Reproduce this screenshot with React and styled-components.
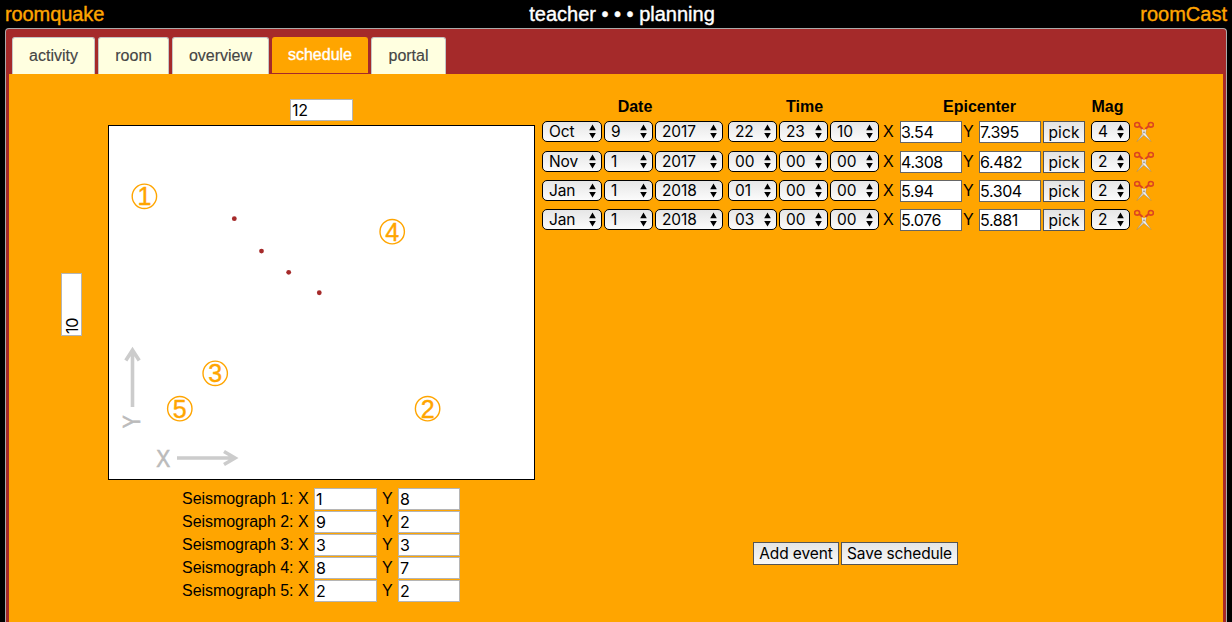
import React from 'react';
import styled, { createGlobalStyle } from 'styled-components';

const GlobalStyle = createGlobalStyle`
  * { box-sizing: border-box; }
  body {
    margin: 0;
    background: #000;
    overflow: hidden;
    font: 16px/18px "Liberation Sans", Arial, sans-serif;
  }
`;

const Page = styled.div`
  display: flex;
  flex-direction: column;
  height: 622px;
  padding: 0 5px;
`;

const TopBar = styled.header`
  display: grid;
  grid-template-columns: 1fr auto 1fr;
  flex: none;
  height: 28px;
  font-size: 20px;
  line-height: 28px;
  color: orange;
  white-space: nowrap;
  -webkit-text-stroke: 0.4px currentColor;
`;

const AppName = styled.div`
  letter-spacing: -0.1px;
`;

const Title = styled.div`
  padding-left: 12px;
  color: #fff;
`;

const AppLink = styled.div`
  text-align: right;
`;

const Frame = styled.main`
  flex: none;
  height: 594px;
  padding: 8px 3px 0;
  background: brown;
  border: 1px solid #aaa;
  border-bottom: 0;
  border-radius: 4px 4px 0 0;
`;

const TabList = styled.nav`
  display: flex;
  gap: 3px;
  height: 37px;
  padding-left: 3px;
`;

const Tab = styled.div`
  width: ${(p) => p.$width}px;
  height: ${(p) => (p.$active ? 36 : 37)}px;
  border: 1px solid ${(p) => (p.$active ? 'orange' : '#c5c5c5')};
  border-bottom: 0;
  border-radius: 3px 3px 0 0;
  background: ${(p) => (p.$active ? 'orange' : 'lightyellow')};
  color: ${(p) => (p.$active ? '#fff' : '#454545')};
  -webkit-text-stroke: ${(p) => (p.$active ? '0.4px #fff' : '0.15px #454545')};
  line-height: ${(p) => (p.$active ? 34 : 36)}px;
  text-align: center;
`;

const Panel = styled.section`
  display: flex;
  height: 548px;
  background: orange;
`;

const RoomColumn = styled.div`
  width: 533px;
  flex: none;
  padding-top: 25px;
`;

const TopDimension = styled.div`
  display: flex;
  height: 26px;
  padding-left: 281px;
`;

const Field = styled.div`
  width: ${(p) => p.$width || 63}px;
  height: 22px;
  border: 1px solid ${(p) => (p.$dark ? '#666' : '#b5b5b5')};
  background: #fff;
  padding-left: ${(p) => (p.$dark ? 0 : 1)}px;
  font: 16px/21px Inter, sans-serif;
  letter-spacing: ${(p) => p.$spacing || '-0.35px'};
  white-space: nowrap;
`;

const MapRow = styled.div`
  display: flex;
  align-items: center;
  height: 355px;
  padding-left: 52px;
`;

const SideField = styled(Field)`
  width: 21px;
  height: 63px;
  margin-top: 4px;
  writing-mode: vertical-rl;
  transform: rotate(180deg);
  padding: 1px 0 0;
  line-height: 20px;
`;

const RoomMap = styled.svg`
  width: 427px;
  height: 355px;
  margin-left: 26px;
  border: 1px solid #000;
  background: #fff;
  font-family: "Liberation Sans", Arial, sans-serif;
`;

const SeismographList = styled.div`
  display: flex;
  flex-direction: column;
  gap: 1px;
  padding: 8px 0 0 173px;
`;

const Seismograph = styled.div`
  display: grid;
  grid-template-columns: 132px 63px 21px 62px;
  height: 22px;
  line-height: 22px;
  letter-spacing: -0.04px;
  white-space: nowrap;
`;

const AxisLabel = styled.span`
  padding-left: 5px;
`;

const ScheduleColumn = styled.div`
  display: flex;
  flex-direction: column;
  width: 615px;
  height: 491px;
  padding-top: 23px;
`;

const Headings = styled.div`
  display: grid;
  grid-template-columns: 186px 153px 197px 59px;
  height: 24px;
  line-height: 19px;
  font-weight: bold;
  text-align: center;
`;

const Events = styled.div`
  display: flex;
  flex-direction: column;
`;

const EventRow = styled.div`
  display: flex;
  gap: 2px;
  height: ${(p) => p.$height}px;
  align-items: flex-start;
`;

const Select = styled.div`
  display: flex;
  flex: none;
  align-items: center;
  justify-content: space-between;
  width: ${(p) => p.$width}px;
  height: 21px;
  padding: 0 5px 0 6px;
  margin-left: ${(p) => p.$before || 0}px;
  border: 1px solid #000;
  border-radius: 5px;
  background: linear-gradient(#e6e6e6, #fbfbfb);
  font: 15.5px/19px Inter, sans-serif;
  letter-spacing: -0.1px;
`;

const Axis = styled.span`
  width: ${(p) => p.$width}px;
  padding-left: ${(p) => p.$inset}px;
  margin: 0 -1px;
  line-height: 21px;
`;

const Button = styled.button`
  height: ${(p) => p.$height || 22}px;
  width: ${(p) => p.$width}px;
  padding: ${(p) => (p.$height ? '0 0 1px' : '1px 0 0')};
  border: 1px solid #555;
  border-radius: 0;
  background: linear-gradient(#e4e4e4, #f8f8f8);
  color: #000;
  font: 15.5px/19px Inter, sans-serif;
  letter-spacing: ${(p) => p.$spacing || '0'};
  white-space: nowrap;
`;

const Actions = styled.div`
  display: flex;
  gap: 2px;
  margin-top: auto;
  padding-left: 211px;
`;

const Cut = styled.svg`
  width: 20px;
  height: 21px;
  margin-left: 2px;
`;

function Arrows() {
  return (
    <svg width="7" height="15" viewBox="0 0 7 15">
      <path d="M3.5 .6 6.8 6.3H.2ZM.2 8.9H6.8L3.5 14.6Z" />
    </svg>
  );
}

function Choice({ width, before, children }) {
  return (
    <Select $width={width} $before={before}>
      {children}
      <Arrows />
    </Select>
  );
}

function Scissors() {
  return (
    <Cut viewBox="0 0 20 21">
      <path d="M12.6 6.8 2.8 20.6 11.6 13Z" fill="#d6d0c8" stroke="#8f8575" strokeWidth=".4" />
      <path d="M7.4 6.8 17.2 20.6 8.4 13Z" fill="#f3f1ee" stroke="#8f8575" strokeWidth=".4" />
      <path d="M7.6 7.6 10 9.6 12.4 7.6 11.2 13H8.8Z" fill="#e4e0da" />
      <g fill="none" stroke="#dc4420" strokeWidth="1.6">
        <ellipse cx="3.1" cy="3.8" rx="2.5" ry="2.3" />
        <ellipse cx="16.9" cy="3.8" rx="2.5" ry="2.3" />
        <path d="M5.2 5 8.7 8M14.8 5 11.3 8" strokeWidth="2.1" />
      </g>
      <circle cx="10" cy="11.3" r=".7" fill="#776a5c" />
    </Cut>
  );
}

const seismographs = [[1, 8], [9, 2], [3, 3], [8, 7], [2, 2]];

const events = [
  { when: ['Oct', '9', '2017', '22', '23', '10'], x: '3.54', y: '7.395', mag: 4, height: 30 },
  { when: ['Nov', '1', '2017', '00', '00', '00'], x: '4.308', y: '6.482', mag: 2, height: 29 },
  { when: ['Jan', '1', '2018', '01', '00', '00'], x: '5.94', y: '5.304', mag: 2, height: 29 },
  { when: ['Jan', '1', '2018', '03', '00', '00'], x: '5.076', y: '5.881', mag: 2, height: 29 },
];

const selectWidths = [60, 49, 68, 49, 49, 49];
const scale = 35.4;
const toX = (x) => x * scale;
const toY = (y) => 353.5 - y * scale;

function Plot() {
  return (
    <RoomMap viewBox="0 0 425 353">
      <g stroke="#ccc" strokeWidth="3.6" fill="none">
        <path d="M23.5 281V225M16.8 234.5 23.5 224 30.2 234.5" />
        <path d="M68 332H126M115 325.5 126 332 115 338.5" />
      </g>
      <g fill="#bbb" stroke="#bbb" strokeWidth=".6" fontSize="24">
        <text x="47.3" y="340.5" textLength="14" lengthAdjust="spacingAndGlyphs">X</text>
        <text transform="translate(30.5 302.2) rotate(-90)" textLength="13" lengthAdjust="spacingAndGlyphs">Y</text>
      </g>
      {events.map((e) => (
        <circle key={e.x} cx={toX(e.x)} cy={toY(e.y) + 1} r="2.4" fill="brown" />
      ))}
      {seismographs.map(([x, y], i) => (
        <g key={i} fill="orange" stroke="orange" fontSize="25" textAnchor="middle">
          <circle cx={toX(x)} cy={toY(y)} r="12.2" fill="none" strokeWidth="1.4" />
          <text x={toX(x)} y={toY(y) + 8.8} strokeWidth=".4">{i + 1}</text>
        </g>
      ))}
    </RoomMap>
  );
}

export default function App() {
  return (
    <Page>
      <GlobalStyle />
      <TopBar>
        <AppName>roomquake</AppName>
        <Title>teacher • • • planning</Title>
        <AppLink>roomCast</AppLink>
      </TopBar>
      <Frame>
        <TabList>
          <Tab $width={83}>activity</Tab>
          <Tab $width={71}>room</Tab>
          <Tab $width={97}>overview</Tab>
          <Tab $width={96} $active>schedule</Tab>
          <Tab $width={75}>portal</Tab>
        </TabList>
        <Panel>
          <RoomColumn>
            <TopDimension><Field>12</Field></TopDimension>
            <MapRow>
              <SideField>10</SideField>
              <Plot />
            </MapRow>
            <SeismographList>
              {seismographs.map(([x, y], i) => (
                <Seismograph key={i}>
                  <span>Seismograph {i + 1}: X</span>
                  <Field>{x}</Field>
                  <AxisLabel>Y</AxisLabel>
                  <Field $width={62}>{y}</Field>
                </Seismograph>
              ))}
            </SeismographList>
          </RoomColumn>
          <ScheduleColumn>
            <Headings>
              <span>Date</span><span>Time</span><span>Epicenter</span><span>Mag</span>
            </Headings>
            <Events>
              {events.map((e, row) => (
                <EventRow key={row} $height={e.height}>
                  {e.when.map((value, i) => (
                    <Choice key={i} width={selectWidths[i]} before={i === 3 ? 3 : 0}>{value}</Choice>
                  ))}
                  <Axis $width={19} $inset={3}>X</Axis>
                  <Field $width={62} $dark $spacing="-0.4px">{e.x}</Field>
                  <Axis $width={15} $inset={0}>Y</Axis>
                  <Field $width={62} $dark $spacing="-0.4px">{e.y}</Field>
                  <Button $width={42} $spacing="0.1px">pick</Button>
                  <Choice width={39} before={4}>{e.mag}</Choice>
                  <Scissors />
                </EventRow>
              ))}
            </Events>
            <Actions>
              <Button $width={86} $height={23} $spacing="-0.1px">Add event</Button>
              <Button $width={117} $height={23} $spacing="-0.15px">Save schedule</Button>
            </Actions>
          </ScheduleColumn>
        </Panel>
      </Frame>
    </Page>
  );
}
